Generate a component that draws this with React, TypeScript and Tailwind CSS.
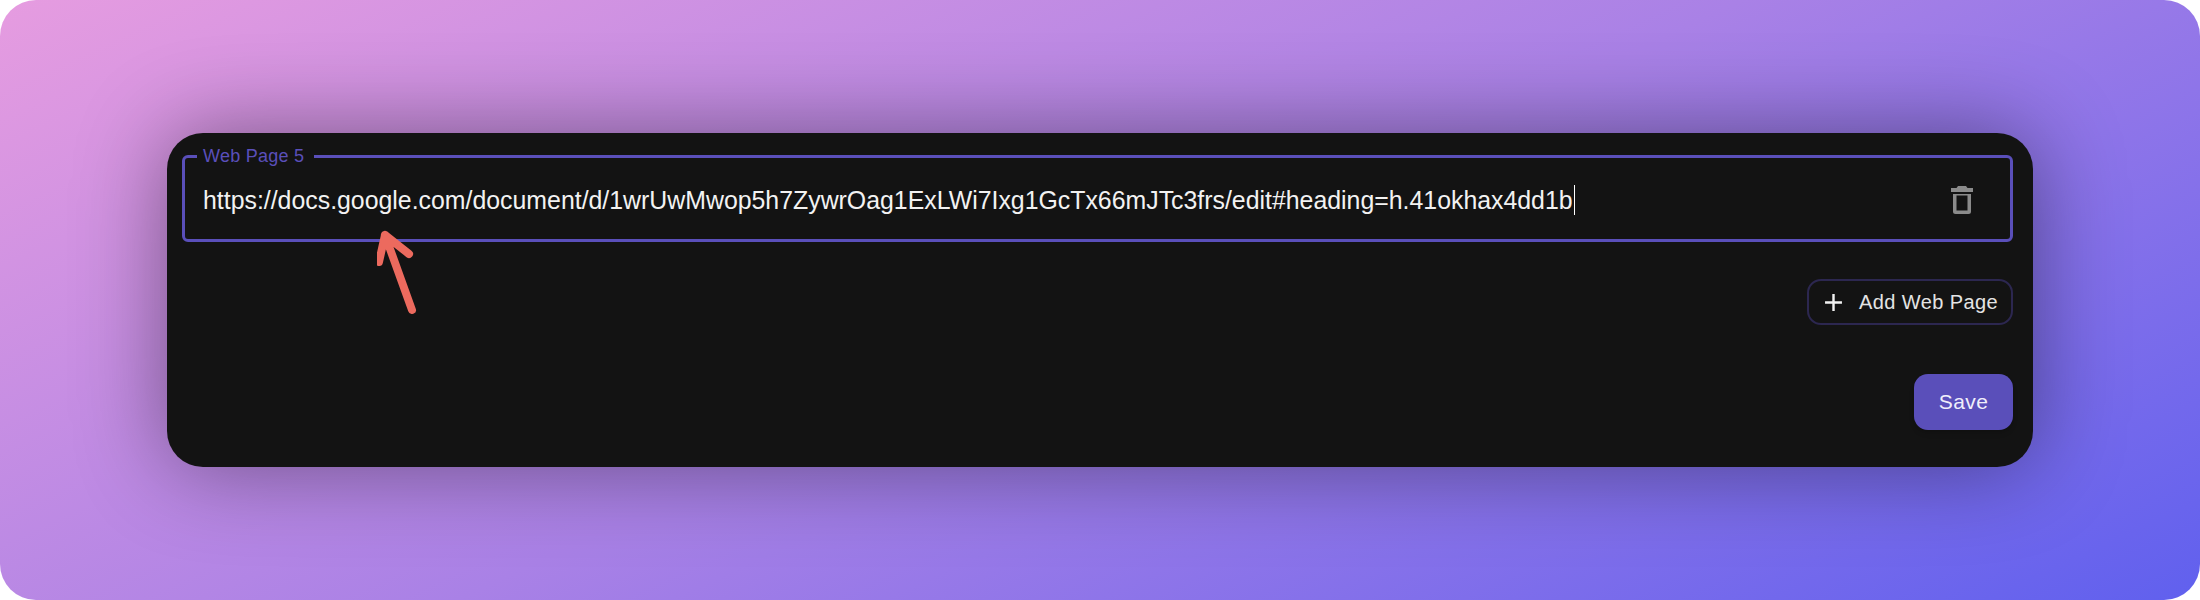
const labelFont = "font-['Liberation_Sans',Arial,sans-serif]";

function TrashIcon() {
  return (
    <svg viewBox="0 0 22 28" className="h-[28px] w-[22px] fill-[#8b8b8b]">
      <path d="M7 0h8l1.500 2H22v4H0V2h5.500L7 0z" />
      <path
        fillRule="evenodd"
        d="M2 8h18v17.500a2.500 2.500 0 0 1-2.500 2.500h-13A2.500 2.500 0 0 1 2 25.500V8zm3.500 1.500V24.500h11V9.500h-11z"
      />
    </svg>
  );
}

function PlusIcon() {
  return (
    <svg viewBox="0 0 24 24" className="h-[29px] w-[29px] fill-[#f2f2f2]">
      <path d="M19 13h-6v6h-2v-6H5v-2h6V5h2v6h6v2z" />
    </svg>
  );
}

function ArrowMark() {
  return (
    <svg
      viewBox="0 0 60 90"
      className="pointer-events-none absolute left-[210px] top-[97px] h-[90px] w-[60px] fill-none stroke-[#ec6a5e] stroke-[8px]"
      strokeLinecap="round"
      strokeLinejoin="round"
    >
      <path d="M8 5L35 80M8 5L2 32M8 5L32 24" />
    </svg>
  );
}

export default function App() {
  return (
    <div className={`h-[600px] w-[2200px] bg-white ${labelFont}`}>
      <div className="flex h-full w-full items-center justify-center rounded-[36px] bg-[linear-gradient(155deg,#e69ce0_0%,#a981e6_50%,#6060ee_100%)]">
        <div className="relative flex h-[334px] w-[1866px] flex-col rounded-[36px] bg-[#131313] pb-[37px] pl-[15px] pr-[20px] pt-[14px] shadow-[0_0_90px_rgba(0,0,0,0.42)]">
          <fieldset className="h-[95px] rounded-[6px] border-[3px] border-[#5a4fba]">
            <legend className="ml-[12px] pl-[6px] pr-[10px] text-[18px] leading-[18px] tracking-[0.25px] text-[#5a4fba]">
              Web Page 5
            </legend>
            <div className="flex h-[69px] items-center justify-between pl-[18px] pr-[37px]">
              <span className="border-r border-white pr-px text-[24.87px] leading-[30px] text-[#f2f2f2]">
                https://docs.google.com/document/d/1wrUwMwop5h7ZywrOag1ExLWi7Ixg1GcTx66mJTc3frs/edit#heading=h.41okhax4dd1b
              </span>
              <TrashIcon />
            </div>
          </fieldset>
          <div className="mt-[37px] flex justify-end">
            <button className="flex h-[46px] w-[206px] items-center gap-[11px] rounded-[14px] border-2 border-[#2c2750] pl-[10px] text-[20px] tracking-[0.4px] text-[#e4e4e4]">
              <PlusIcon />
              Add Web Page
            </button>
          </div>
          <div className="mt-auto flex justify-end">
            <button className="h-[56px] w-[99px] rounded-[14px] bg-[#5a4fba] text-[21px] tracking-[0.4px] text-[#f0eefa] shadow-md">
              Save
            </button>
          </div>
          <ArrowMark />
        </div>
      </div>
    </div>
  );
}
